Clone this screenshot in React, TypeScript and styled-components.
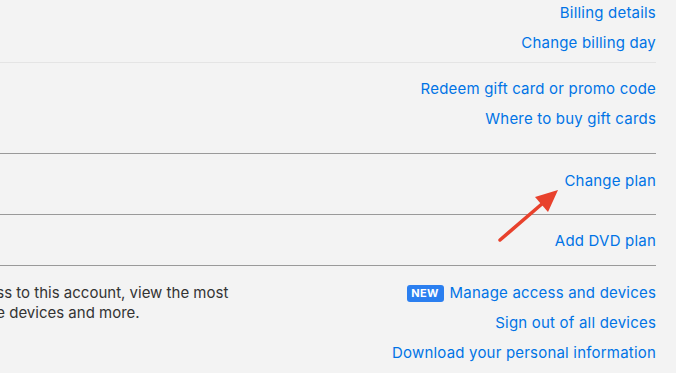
import React from 'react'
import styled, { createGlobalStyle } from 'styled-components'

const GlobalStyle = createGlobalStyle`
  html, body {
    margin: 0;
    padding: 0;
    background: #f3f3f3;
  }
  body {
    font-family: Inter, "Noto Sans", "Liberation Sans", sans-serif;
    overflow: hidden;
  }
`

const Page = styled.div`
  position: relative;
  width: 676px;
  height: 373px;
  overflow: hidden;
`

const Content = styled.div`
  margin-left: -94px;
  width: 770px;
  padding-right: 20px;
  box-sizing: border-box;
`

const Row = styled.div<{ $top: number; $bottom: number; $line?: 'light' | 'dark' }>`
  display: flex;
  justify-content: space-between;
  align-items: flex-start;
  padding: ${p => p.$top}px 0 ${p => p.$bottom}px;
  border-bottom: ${p =>
    p.$line === 'light' ? '1px solid #e4e4e4' : p.$line === 'dark' ? '1px solid #999999' : 'none'};
`

const Description = styled.div`
  display: flex;
  flex-direction: column;
`

const DescLine = styled.span<{ $shift?: number }>`
  display: block;
  margin-left: ${p => p.$shift || 0}px;
  font-size: 15px;
  line-height: 20px;
  color: #333333;
  white-space: nowrap;
`

const Links = styled.div`
  display: flex;
  flex-direction: column;
  align-items: flex-end;
  gap: 10px;
  margin-left: auto;
`

const LinkItem = styled.a`
  display: flex;
  align-items: center;
  gap: 6px;
  font-size: 15px;
  line-height: 20px;
  letter-spacing: 0.2px;
  color: #0073e6;
  text-decoration: none;
  cursor: pointer;
  white-space: nowrap;
`

const Badge = styled.span`
  display: inline-flex;
  align-items: center;
  justify-content: center;
  width: 37px;
  height: 17px;
  border-radius: 3px;
  background: #2b7ff0;
  color: #ffffff;
  font-size: 11px;
  font-weight: 700;
  letter-spacing: 0.4px;
`

const Arrow = styled.svg`
  position: absolute;
  left: 0;
  top: 0;
  pointer-events: none;
`

const App = () => {
  return (
    <Page>
      <GlobalStyle />
      <Content>
        <Row $top={3} $bottom={9} $line='light'>
          <Links>
            <LinkItem>Billing details</LinkItem>
            <LinkItem>Change billing day</LinkItem>
          </Links>
        </Row>
        <Row $top={16} $bottom={24} $line='dark'>
          <Links>
            <LinkItem>Redeem gift card or promo code</LinkItem>
            <LinkItem>Where to buy gift cards</LinkItem>
          </Links>
        </Row>
        <Row $top={17} $bottom={23} $line='dark'>
          <Links>
            <LinkItem>Change plan</LinkItem>
          </Links>
        </Row>
        <Row $top={16} $bottom={14} $line='dark'>
          <Links>
            <LinkItem>Add DVD plan</LinkItem>
          </Links>
        </Row>
        <Row $top={17} $bottom={20}>
          <Description>
            <DescLine>Control access to this account, view the most</DescLine>
            <DescLine $shift={-5}>recently active devices and more.</DescLine>
          </Description>
          <Links>
            <LinkItem>
              <Badge>NEW</Badge>
              Manage access and devices
            </LinkItem>
            <LinkItem>Sign out of all devices</LinkItem>
            <LinkItem>Download your personal information</LinkItem>
          </Links>
        </Row>
      </Content>
      <Arrow width='676' height='373' viewBox='0 0 676 373'>
        <line x1='500' y1='240' x2='543' y2='203' stroke='#e8412c' strokeWidth='3.5' strokeLinecap='round' />
        <polygon points='558,190 535,197 548,212' fill='#e8412c' />
      </Arrow>
    </Page>
  )
}

export default App
